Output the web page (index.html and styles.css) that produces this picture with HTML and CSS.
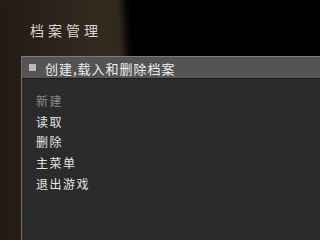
FILE: index.html
```html
<!DOCTYPE html>
<html lang="zh">
<head>
<meta charset="utf-8">
<title>档案管理</title>
<link rel="stylesheet" href="styles.css">
</head>
<body>
<div class="screen">
  <h1 class="title">档案管理</h1>
  <section class="panel">
    <header class="panel-head">
      <span class="bullet"></span>
      <span class="head-text">创建,载入和删除档案</span>
    </header>
    <ul class="menu">
      <li class="item disabled">新建</li>
      <li class="item">读取</li>
      <li class="item">删除</li>
      <li class="item">主菜单</li>
      <li class="item">退出游戏</li>
    </ul>
  </section>
</div>
</body>
</html>
```

FILE: styles.css
```css
html, body {
  margin: 0;
  padding: 0;
  background: #000;
}
.screen {
  width: 100%;
  min-height: 100vh;
  overflow: hidden;
  font-family: "Noto Sans CJK SC", "Noto Sans", sans-serif;
  background:
    radial-gradient(circle at -1953px 150px,
      #221b13 1953px,
      #2a2219 2000px,
      #342a20 2060px,
      #30271d 2076px,
      #0a0806 2084px,
      #000 2089px);
  display: flex;
  flex-direction: column;
}
.title {
  margin: 23px 0 0 30px;
  font-size: 14px;
  line-height: 14px;
  font-weight: normal;
  letter-spacing: 4px;
  color: #d8d5ce;
}
.panel {
  margin: 19px 0 0 21px;
  flex: 1;
  background: #2b2b2b;
  border-left: 1px solid #6e6e6e;
}
.panel-head {
  height: 21px;
  border-top: 1px solid #7c7a7a;
  border-bottom: 1px solid #1c1c1c;
  background: #555354;
  display: flex;
  align-items: center;
  padding-left: 7px;
  gap: 9px;
}
.bullet {
  width: 7px;
  height: 7px;
  background: #bcb8bc;
  flex: none;
}
.head-text {
  font-size: 13px;
  line-height: 13px;
  letter-spacing: 1px;
  color: #f0f0f0;
  padding-top: 2px;
}
.menu {
  list-style: none;
  margin: 0;
  padding: 12px 0 0 14px;
}
.item {
  font-size: 12px;
  line-height: 20.7px;
  letter-spacing: 1.5px;
  color: #e6e6e6;
}
.item.disabled {
  color: #8a8a8a;
}
```
